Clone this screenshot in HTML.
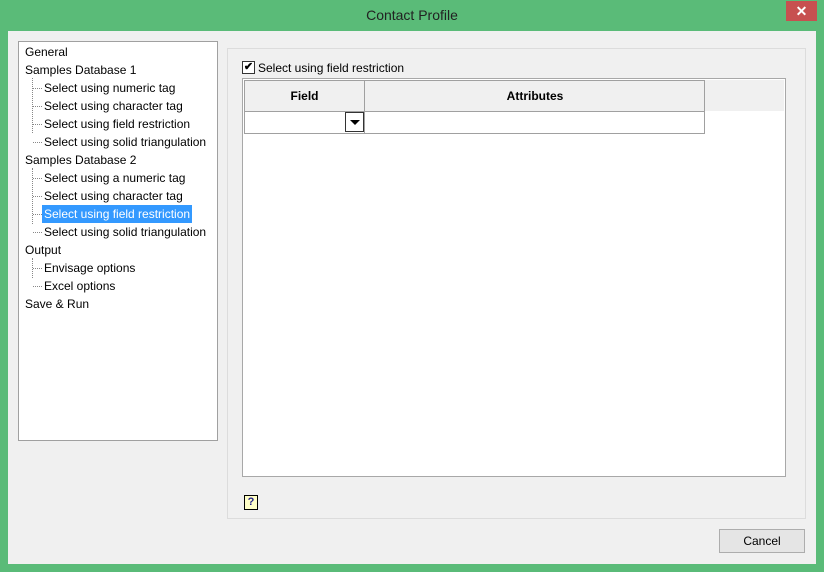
<!DOCTYPE html>
<html><head><style>
*{margin:0;padding:0;box-sizing:border-box}
body{width:824px;height:572px;background:#5abb78;font-family:"Liberation Sans",sans-serif;font-size:12px;color:#000;position:relative;overflow:hidden}
.a{position:absolute}
.title{left:0;top:7px;width:824px;text-align:center;font-size:14px;color:#222}
.close{left:786px;top:1px;width:31px;height:20px;background:#c75050;color:#fff;text-align:center;font-size:14px;line-height:20px;font-weight:bold}
.client{left:8px;top:31px;width:808px;height:533px;background:#f0f0f0}
.tree{left:18px;top:41px;width:200px;height:400px;background:#fff;border:1px solid #a0a0a0}
.it{position:absolute;white-space:nowrap;height:18px;line-height:18px}
.l1{left:6px}
.l2{left:25px}
.sel{background:#3399ff;color:#fff;padding:0 2px;left:23px}
.dl{position:absolute;border-left:1px dotted #888;left:13px}
.dh{position:absolute;border-top:1px dotted #888;left:14px;width:9px}
</style></head><body>
<div class="a title">Contact Profile</div>
<div class="a close">✕</div>
<div class="a client"></div>
<div class="a tree">
<div class="it l1" style="top:1px">General</div>
<div class="it l1" style="top:19px">Samples Database 1</div>
<div class="dl" style="top:36px;height:55px"></div>
<div class="dh" style="top:46px"></div><div class="it l2" style="top:37px">Select using numeric tag</div>
<div class="dh" style="top:64px"></div><div class="it l2" style="top:55px">Select using character tag</div>
<div class="dh" style="top:82px"></div><div class="it l2" style="top:73px">Select using field restriction</div>
<div class="dh" style="top:100px"></div><div class="it l2" style="top:91px">Select using solid triangulation</div>
<div class="dl" style="top:109px;height:-0px"></div>
<div class="it l1" style="top:109px">Samples Database 2</div>
<div class="dl" style="top:126px;height:56px"></div>
<div class="dh" style="top:136px"></div><div class="it l2" style="top:127px">Select using a numeric tag</div>
<div class="dh" style="top:154px"></div><div class="it l2" style="top:145px">Select using character tag</div>
<div class="dh" style="top:172px"></div><div class="it sel" style="top:163px">Select using field restriction</div>
<div class="dh" style="top:190px"></div><div class="it l2" style="top:181px">Select using solid triangulation</div>
<div class="it l1" style="top:199px">Output</div>
<div class="dl" style="top:216px;height:20px"></div>
<div class="dh" style="top:226px"></div><div class="it l2" style="top:217px">Envisage options</div>
<div class="dh" style="top:244px"></div><div class="it l2" style="top:235px">Excel options</div>
<div class="it l1" style="top:253px">Save &amp; Run</div>
</div>
<div class="a" style="left:227px;top:48px;width:579px;height:471px;border:1px solid #dcdcdc"></div>
<div class="a" style="left:242px;top:61px;width:13px;height:13px;border:1px solid #333;background:#fff;font-size:11px;line-height:11px;text-align:center;font-weight:bold">✔</div>
<div class="a" style="left:258px;top:61px">Select using field restriction</div>
<div class="a" style="left:242px;top:78px;width:544px;height:399px;border:1px solid #a8a8a8;background:#fff"></div>
<div class="a" style="left:244px;top:80px;width:540px;height:31px;background:#f0f0f0"></div>
<div class="a" style="left:244px;top:80px;width:121px;height:54px;border:1px solid #a0a0a0;border-right:none"></div>
<div class="a" style="left:244px;top:111px;width:461px;height:1px;background:#a0a0a0"></div>
<div class="a" style="left:364px;top:80px;width:341px;height:54px;border:1px solid #a0a0a0"></div>
<div class="a" style="left:244px;top:89px;width:121px;text-align:center;font-weight:bold">Field</div>
<div class="a" style="left:365px;top:89px;width:340px;text-align:center;font-weight:bold">Attributes</div>
<div class="a" style="left:345px;top:112px;width:19px;height:20px;border:1px solid #333;background:#fff"><div style="margin:7px auto 0;width:0;height:0;border-left:5px solid transparent;border-right:5px solid transparent;border-top:5px solid #000"></div></div>
<div class="a" style="left:244px;top:495px;width:14px;height:15px;border:1px solid #000;background:#ffffc8;font-size:11px;font-weight:bold;color:#22228a;text-align:center;line-height:13px">?</div>
<div class="a" style="left:719px;top:529px;width:86px;height:24px;border:1px solid #adadad;background:#e5e5e5;text-align:center;line-height:22px">Cancel</div>
</body></html>
